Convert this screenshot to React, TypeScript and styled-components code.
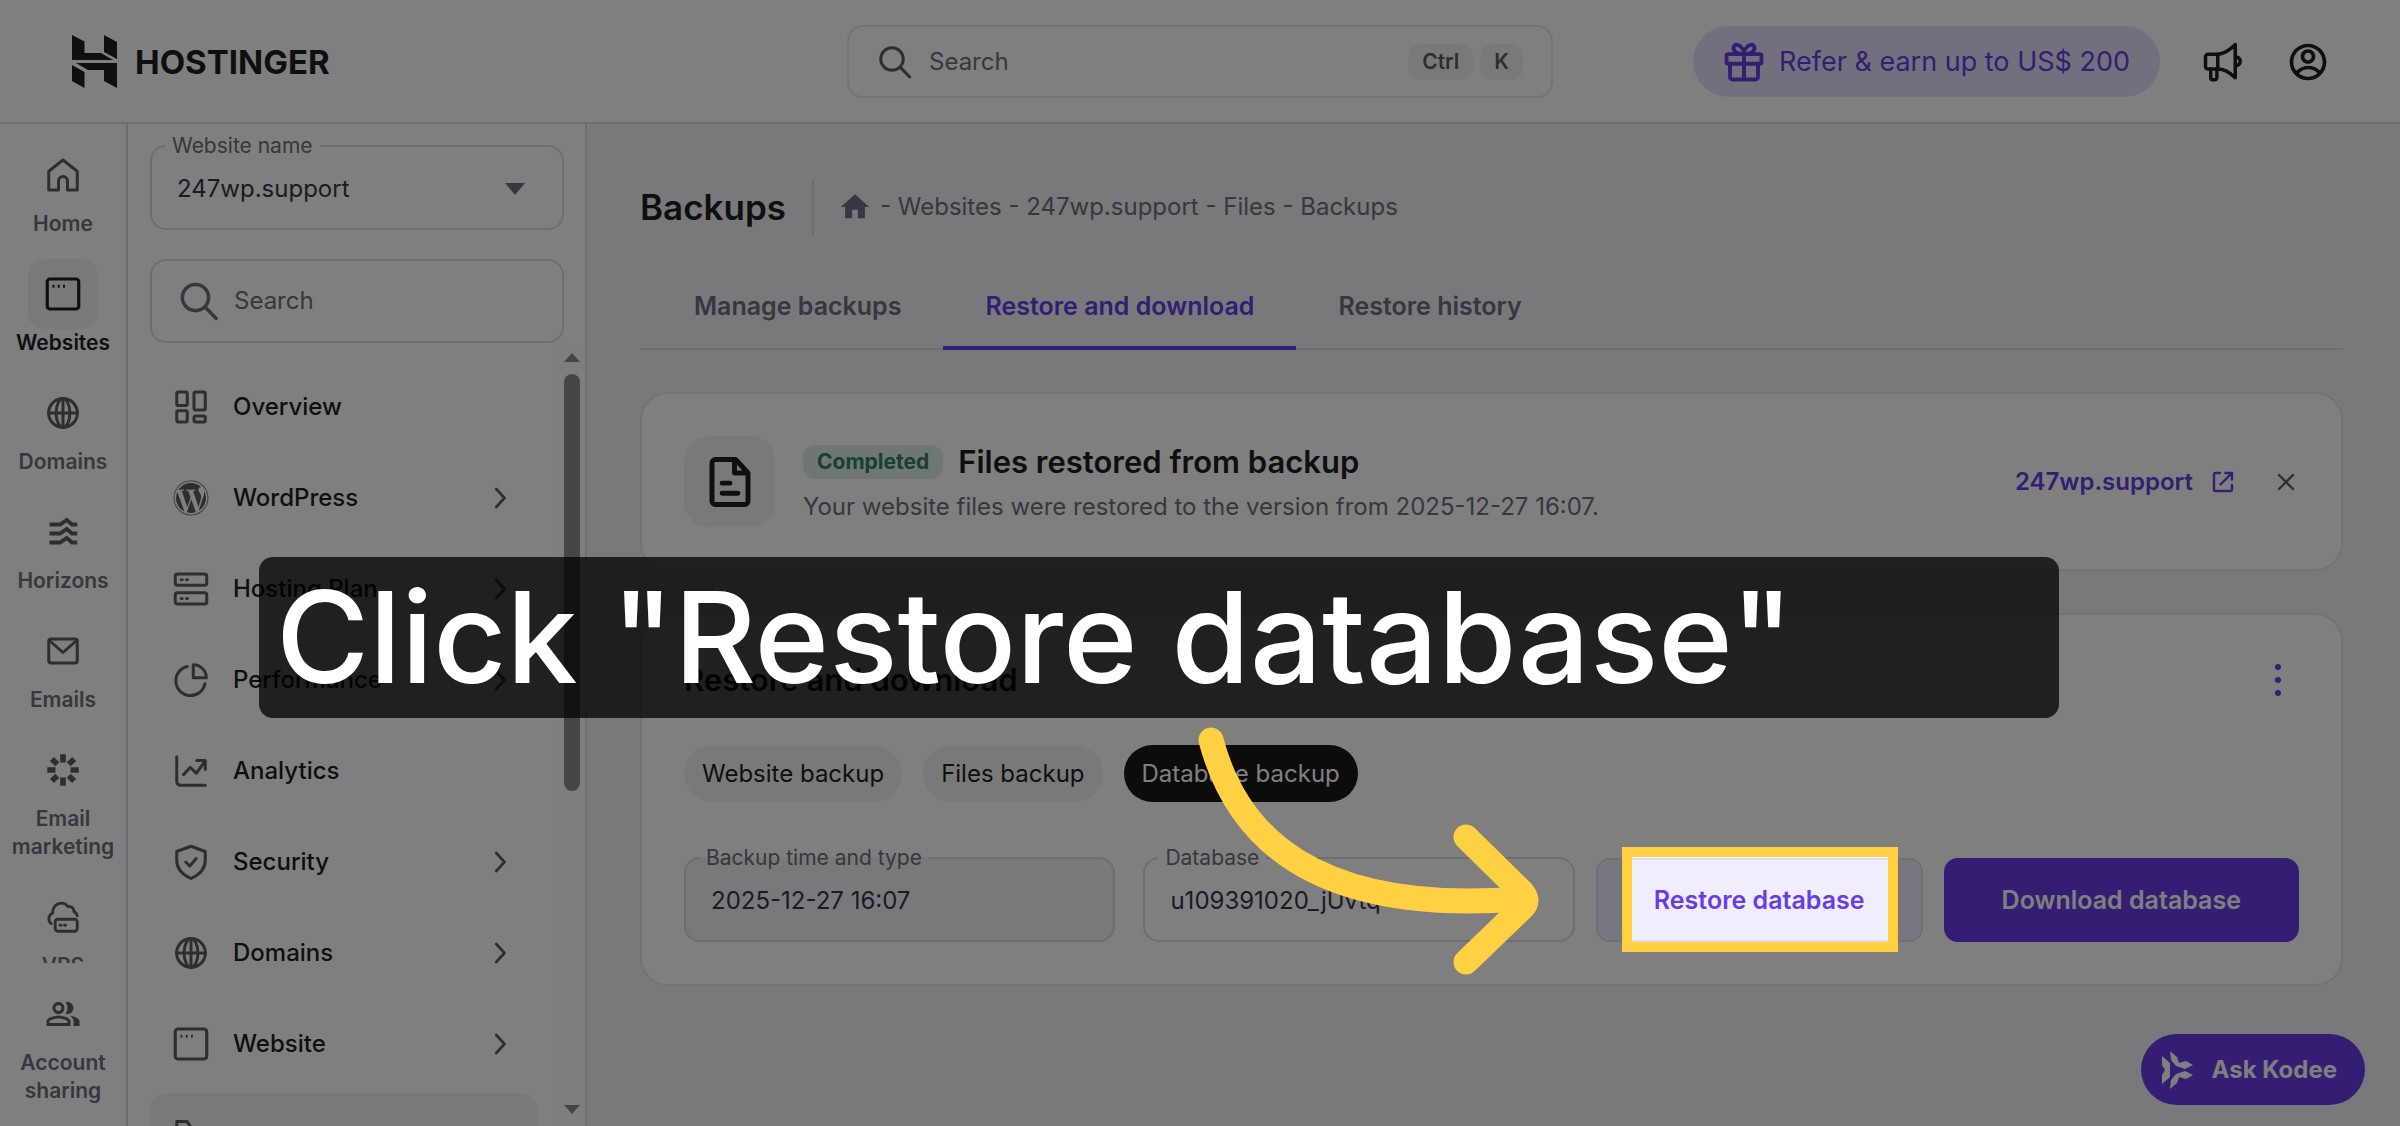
import React from "react";
import styled, { createGlobalStyle, css } from "styled-components";
import { FaWordpress } from "react-icons/fa";
import { RiAccountCircleLine } from "react-icons/ri";
import { MdHome, MdOutlinePeopleAlt } from "react-icons/md";

const color = {
  text: "#1d1e20",
  value: "#36344d",
  muted: "#6d6f80",
  icon: "#5c5d63",
  line: "#dcdce4",
  softLine: "#e6e6ea",
  soft: "#f2f2f3",
  page: "#f2f2f6",
  purple: "#673de6",
  lilac: "#e6e0fb",
  yellow: "#ffd041",
};

const Global = createGlobalStyle`
  *, *::before, *::after { box-sizing: border-box; }
  body { margin: 0; }
  body, button, input, select {
    font-family: Inter, "Liberation Sans", sans-serif;
    font-size: 24px;
    line-height: 32px;
    color: ${color.text};
  }
  button { border: 0; background: none; padding: 0; cursor: pointer; }
  a { text-decoration: none; color: inherit; }
  h1, h2, p, ul, ol { margin: 0; padding: 0; }
  ul, ol { list-style: none; }
`;

/* ---------- Icons ---------- */

type IconProps = { size?: number; width?: number; children?: React.ReactNode };

const Icon = ({ size = 36, width = 2, children }: IconProps) => (
  <svg width={size} height={size} viewBox="0 0 24 24" fill="none" stroke="currentColor"
    strokeWidth={width} strokeLinecap="round" strokeLinejoin="round" aria-hidden="true">
    {children}
  </svg>
);

const SearchIcon = ({ size = 42 }: { size?: number }) => (
  <Icon size={size} width={2}><circle cx="10" cy="10" r="7.5" /><path d="m15.6 15.6 6.2 6.4" /></Icon>
);
const HouseIcon = () => (
  <Icon width={2}><path d="M2.5 9.5 12 2l9.500 7.500V22h-6.500v-6a3 3 0 0 0-6 0v6H2.500Z" /></Icon>
);
const WindowIcon = () => (
  <Icon width={2.1}>
    <rect x="1.500" y="2" width="21" height="20" rx="1.800" />
    <path d="M5 6.800h1.300M8.500 6.800h1.300M12 6.800h1.300" strokeLinecap="butt" />
  </Icon>
);
const GlobeIcon = () => (
  <Icon width={2}>
    <circle cx="12" cy="12" r="9.600" /><ellipse cx="12" cy="12" rx="4.600" ry="9.600" />
    <path d="M12 2.400v19.200M2.400 12h19.200" />
  </Icon>
);
const WavesIcon = () => (
  <Icon width={2.6}>
    <path strokeLinecap="butt" strokeLinejoin="miter" d="M3 7h7l4.500-3 3.500 3h3.500M3 13h7l4.500-3 3.500 3h3.500M3 19h7l4.500-3 3.500 3h3.500" />
  </Icon>
);
const MailIcon = () => (
  <Icon width={2}><rect x="2.500" y="4" width="19" height="16" rx="1.500" /><path d="m3.500 5.500 8.500 7.500 8.500-7.500" /></Icon>
);
const BurstIcon = () => (
  <Icon width={3.8}>
    <path strokeLinecap="butt" d="M12 1.500v5.500M12 17v5.500M1.500 12H7M17 12h5.500M4.600 4.600l3.600 3.600M15.800 15.800l3.600 3.600M4.600 19.400l3.600-3.600M15.800 8.200l3.600-3.600" />
  </Icon>
);
const CloudServerIcon = () => (
  <Icon width={1.9}>
    <path d="M4.200 16.500C1.800 14.500 2 10.800 5 9.500 5 3 12.500.500 15.200 5c3.300-.300 4.300 2.200 4 3.400 1.300.500 2 1.600 2.300 2.800" />
    <rect x="6.800" y="13.500" width="14.700" height="8" rx="1.800" />
    <path d="M10 17.500h.800M13 17.500h.800" />
  </Icon>
);
const GridIcon = () => (
  <Icon width={2}>
    <rect x="2.500" y="2" width="7" height="9" rx="1" /><rect x="14" y="2" width="7.500" height="12" rx="1" />
    <rect x="2.500" y="14.500" width="7" height="7.500" rx="1" /><rect x="14" y="18" width="7.500" height="4" rx="1" />
  </Icon>
);
const ServersIcon = () => (
  <Icon width={2}>
    <rect x="1.500" y="2" width="21" height="7.500" rx="1.500" /><rect x="1.500" y="14.500" width="21" height="7.500" rx="1.500" />
    <path d="M5.500 5.800h.600M9 5.800h.600M5.500 18.300h.600M9 18.300h.600" />
  </Icon>
);
const PieIcon = () => (
  <Icon width={2}><path d="M13.500 1.800v8.700h8.700a8.700 8.700 0 0 0-8.700-8.700Z" /><path d="M9.500 3a9.800 9.800 0 1 0 11.800 11.500" /></Icon>
);
const TrendIcon = () => (
  <Icon width={2}><path d="M2.500 2.500V19a2.500 2.500 0 0 0 2.500 2.500h16.500M7 14.500l4.500-5 4 4L21 6M15.800 5H21.500v5.800" /></Icon>
);
const ShieldIcon = () => (
  <Icon width={2}><path d="M12 1.500 21.500 5v6c0 5.500-4 9.500-9.500 12-5.500-2.500-9.500-6.500-9.500-12V5Z" /><path d="m8.500 12 2.700 2.700 4.300-5" /></Icon>
);
const FolderIcon = () => (
  <Icon width={2}><path d="M2.500 3V20h19V7H12L9.500 3Z" /></Icon>
);
const ChevronIcon = () => <Icon size={36} width={1.8}><path d="m9.500 6 5.500 6-5.500 6" /></Icon>;
const GiftIcon = () => (
  <Icon size={42} width={2.2}>
    <rect x="2" y="7.500" width="20" height="5.500" rx="1" /><path d="M4 13v7.500A1.500 1.500 0 0 0 5.500 22h13a1.500 1.500 0 0 0 1.500-1.500V13M12 7.500V22" />
    <path d="M12 7.500C10 7.500 6 6.800 6 4.200 6 1.400 9.500 1 12 6c2.500-5 6-4.600 6-1.800 0 2.600-4 3.300-6 3.300Z" />
  </Icon>
);
const MegaphoneIcon = () => (
  <Icon size={42} width={2}>
    <path d="M3.500 7.500H9v8.500H3.500a1.500 1.500 0 0 1-1.500-1.500V9a1.500 1.500 0 0 1 1.500-1.500Z" />
    <path d="M9 7.500c4 0 7.500-3 10-5.500v19C16.500 18.500 13 16 9 16M5 16v5a1.200 1.200 0 0 0 1.200 1.200h1A1.200 1.200 0 0 0 8.500 21v-5M19 9c3.800.200 3.800 5 0 5.200" />
  </Icon>
);
const DocumentIcon = () => (
  <Icon size={54} width={2.2}>
    <path d="M14.500 2H5.500a1.500 1.500 0 0 0-1.500 1.500v17A1.500 1.500 0 0 0 5.500 22h13a1.500 1.500 0 0 0 1.500-1.500V8Z" />
    <path d="M14 2.500V8h5.500M8.500 12.500h3.500M8.500 17h7" />
  </Icon>
);
const ExternalIcon = () => (
  <Icon size={24} width={2.4}><path d="M9 3H4.500A1.500 1.500 0 0 0 3 4.500v15A1.500 1.500 0 0 0 4.500 21h15a1.500 1.500 0 0 0 1.500-1.500V15M14.500 3H21v6.500M21 3 9.500 14.500" /></Icon>
);
const CloseIcon = () => <Icon size={24} width={2.4}><path d="m5 5 14 14M19 5 5 19" /></Icon>;
const KodeeIcon = () => (
  <svg width="32" height="38" viewBox="0 0 32 38" fill="currentColor" aria-hidden="true">
    <path d="m0 5 8 7v14l-8 7v-9l3-5-3-5Z" />
    <path d="m8 0 7 6 2 6 7-2 7 4-8 4-9-3-5-6Z" />
    <path d="m8 38 7-6 2-6 7 2 7-4-8-4-9 3-5 6Z" />
  </svg>
);
const LogoMark = () => (
  <svg width="45" height="53" viewBox="0 0 45 53" fill="currentColor" aria-hidden="true">
    <path d="M0 0 12.500 6.500V18H29l12 7H0ZM32 0l13 7v17l-13-7ZM45 28v25l-13-7V35H16L4 28ZM0 30 12.500 37v16L0 46Z" />
  </svg>
);
const Caret = () => (
  <svg width="20" height="12" viewBox="0 0 20 12" fill="currentColor" aria-hidden="true"><path d="M0 0h20L10 12Z" /></svg>
);

/* ---------- Shell and header ---------- */

const Shell = styled.div`
  position: relative;
  display: flex;
  flex-direction: column;
  height: 100vh;
  overflow: hidden;
  background: #fff;
`;
const Header = styled.header`
  display: grid;
  grid-template-columns: 1fr minmax(auto, 706px) 1fr;
  align-items: center;
  gap: 24px;
  padding: 25px 70px 24px;
  border-bottom: 2px solid ${color.line};
`;
const Logo = styled.a`
  display: flex;
  align-items: center;
  gap: 18px;
  padding-left: 2px;
  font-size: 33px;
  font-weight: 700;
  color: ${color.text};
`;
const SearchBox = styled.label<{ $tall?: boolean }>`
  display: flex;
  align-items: center;
  gap: ${(p) => (p.$tall ? 14 : 16)}px;
  height: ${(p) => (p.$tall ? 84 : 73)}px;
  padding: 0 28px;
  padding-left: ${(p) => (p.$tall ? 26 : 28)}px;
  border: 2px solid ${(p) => (p.$tall ? color.line : color.softLine)};
  border-radius: 16px;
  color: ${(p) => (p.$tall ? color.muted : color.icon)};
  svg { flex: none; }
`;
const SearchInput = styled.input`
  flex: 1;
  min-width: 0;
  border: 0;
  padding: 0;
  outline: 0;
  background: transparent;
  &::placeholder { color: ${color.muted}; opacity: 1; }
`;
const Keys = styled.span`
  display: flex;
  gap: 7px;
`;
const Key = styled.kbd`
  padding: 4px 14px;
  border-radius: 12px;
  background: ${color.soft};
  color: ${color.icon};
  font: 600 21px/28px Inter, "Liberation Sans", sans-serif;
`;
const HeaderActions = styled.div`
  display: flex;
  align-items: center;
  justify-content: flex-end;
  gap: 42px;
`;
const ReferButton = styled.button`
  display: flex;
  align-items: center;
  gap: 14px;
  height: 71px;
  padding: 0 30px;
  border-radius: 36px;
  background: ${color.lilac};
  color: ${color.purple};
  font-size: 27px;
  white-space: nowrap;
`;
const IconButton = styled.button<{ $narrow?: boolean }>`
  display: flex;
  align-items: center;
  justify-content: center;
  min-width: ${(p) => (p.$narrow ? 26 : 42)}px;
  min-height: 42px;
  color: ${(p) => (p.$narrow ? color.icon : color.text)};
`;

/* ---------- Navigation ---------- */

const Body = styled.div`
  flex: 1;
  min-height: 0;
  display: flex;
`;
const Rail = styled.nav`
  display: flex;
  flex-direction: column;
  width: 128px;
  border-right: 2px solid ${color.line};
`;
const RailList = styled.ul`
  flex: 1;
  min-height: 0;
  overflow: hidden;
  display: flex;
  flex-direction: column;
  gap: 21px;
  padding-top: 16px;
`;
const RailFooter = styled.div`padding: 16px 0 21px;`;
const RailLink = styled.a<{ $active?: boolean }>`
  display: flex;
  flex-direction: column;
  align-items: center;
  text-align: center;
  font-size: 21px;
  line-height: 28px;
  font-weight: 600;
  color: ${(p) => (p.$active ? color.text : color.muted)};
`;
const RailIcon = styled.span<{ $active?: boolean }>`
  display: flex;
  align-items: center;
  justify-content: center;
  width: 70px;
  height: 70px;
  border-radius: 16px;
  color: ${(p) => (p.$active ? color.text : color.icon)};
  background: ${(p) => (p.$active ? color.soft : "transparent")};
`;
const Sidebar = styled.aside`
  display: flex;
  flex-direction: column;
  width: 459px;
  padding: 9px 0 0 22px;
  border-right: 2px solid ${color.line};
`;
const SidebarTop = styled.div`
  display: flex;
  flex-direction: column;
  gap: 29px;
  padding-right: 21px;
`;
const MenuArea = styled.div`
  flex: 1;
  min-height: 0;
  display: flex;
  overflow: hidden;
`;
const Menu = styled.ul`
  flex: 1;
  display: flex;
  flex-direction: column;
  gap: 7px;
  padding: 22px 22px 0 0;
`;
const MenuLink = styled.a<{ $active?: boolean }>`
  display: flex;
  align-items: center;
  gap: 24px;
  height: 84px;
  padding: 0 19px 0 23px;
  border-radius: 16px;
  background: ${(p) => (p.$active ? color.soft : "transparent")};
  font-weight: 500;
  svg { flex: none; color: ${color.icon}; }
`;
const MenuText = styled.span`flex: 1;`;
const Scrollbar = styled.div`
  display: flex;
  flex-direction: column;
  align-items: center;
  width: 26px;
  padding: 10px 0 12px;
  background: #fcfcfc;
  color: #8b8b8b;
`;
const ScrollTrack = styled.div`
  flex: 1;
  padding: 12px 0;
`;
const ScrollThumb = styled.div`
  width: 16px;
  height: 58%;
  border-radius: 8px;
  background: #8b8b8b;
`;
const ScrollArrow = styled.div<{ $down?: boolean }>`
  border: 8px solid transparent;
  ${(p) => p.$down
    ? css`border-top: 9px solid currentColor; border-bottom: 0;`
    : css`border-bottom: 9px solid currentColor; border-top: 0;`}
`;

/* ---------- Outlined fields ---------- */

const FieldBox = styled.fieldset<{ $filled?: boolean }>`
  flex: 1;
  min-width: 0;
  margin: 0;
  padding: 0 0 9px 13px;
  border: 2px solid ${color.line};
  border-radius: 16px;
  background: ${(p) => (p.$filled ? color.page : "transparent")};
`;
const FieldLegend = styled.legend`
  padding: 0 7px;
  font-size: 21px;
  line-height: 26px;
  color: ${color.muted};
`;
const FieldRow = styled.div`
  display: flex;
  align-items: center;
  height: 60px;
  padding: 0 37px 0 12px;
  color: ${color.muted};
`;
const control = css`
  appearance: none;
  flex: 1;
  min-width: 0;
  padding: 0;
  border: 0;
  outline: 0;
  background: transparent;
  color: ${color.value};
`;
const Select = styled.select`${control}`;
const TextInput = styled.input`${control}`;

/* ---------- Main area ---------- */

const Main = styled.main`
  flex: 1;
  min-width: 0;
  padding: 55px 57px 0 53px;
  background: ${color.page};
`;
const TitleRow = styled.div`
  display: flex;
  align-items: center;
  height: 56px;
`;
const PageTitle = styled.h1`
  font-size: 35px;
  font-weight: 600;
  padding-right: 26px;
`;
const Crumbs = styled.nav`
  display: flex;
  align-items: center;
  gap: 8px;
  align-self: stretch;
  padding-left: 24px;
  border-left: 2px solid ${color.line};
  color: ${color.muted};
`;
const Tabs = styled.div`
  display: flex;
  margin-top: 30px;
  padding-left: 12px;
  border-bottom: 2px solid ${color.line};
`;
const Tab = styled.button<{ $active?: boolean }>`
  margin-bottom: -2px;
  padding: 25px 42px 24px;
  border-bottom: 4px solid ${(p) => (p.$active ? color.purple : "transparent")};
  font-size: 25px;
  font-weight: 600;
  color: ${(p) => (p.$active ? color.purple : color.muted)};
`;
const Card = styled.section`
  margin-top: 42px;
  padding: 42px;
  border: 2px solid ${color.softLine};
  border-radius: 28px;
  background: #fff;
`;
const Notice = styled.div`
  display: flex;
  align-items: center;
`;
const Tile = styled.div`
  display: flex;
  align-items: center;
  justify-content: center;
  width: 91px;
  height: 91px;
  border-radius: 24px;
  background: ${color.page};
`;
const NoticeText = styled.div`
  flex: 1;
  display: flex;
  flex-direction: column;
  gap: 11px;
  padding: 3px 0 0 28px;
`;
const NoticeHead = styled.div`
  display: flex;
  align-items: center;
  gap: 15px;
`;
const Badge = styled.span`
  padding: 3px 14px;
  border-radius: 12px;
  background: #dcefe7;
  color: #2c8260;
  font-size: 21px;
  line-height: 28px;
  font-weight: 700;
`;
const Heading = styled.h2`
  font-size: 31px;
  line-height: 36px;
  font-weight: 600;
`;
const Muted = styled.p`color: ${color.muted};`;
const SiteLink = styled.a`
  display: flex;
  align-items: center;
  gap: 18px;
  margin-right: 38px;
  font-weight: 600;
  color: ${color.purple};
`;
const CardHead = styled.div`
  display: flex;
  align-items: center;
  justify-content: space-between;
  height: 45px;
`;
const Chips = styled.div`
  display: flex;
  gap: 21px;
  margin-top: 43px;
`;
const Chip = styled.button<{ $active?: boolean }>`
  height: 57px;
  padding: 0 18px;
  border-radius: 29px;
  background: ${(p) => (p.$active ? "#18181a" : color.soft)};
  color: ${(p) => (p.$active ? "#fff" : color.text)};
`;
const FormRow = styled.form`
  display: flex;
  align-items: flex-end;
  gap: 21px;
  margin-top: 43px;
`;
const Fields = styled.div`
  flex: 1;
  display: flex;
  gap: 28px;
`;
const Action = styled.button<{ $primary?: boolean }>`
  height: 84px;
  padding: 0 56px;
  border: 2px solid ${(p) => (p.$primary ? color.purple : "#e0dcf0")};
  border-radius: 14px;
  background: ${(p) => (p.$primary ? color.purple : "#f0edff")};
  color: ${(p) => (p.$primary ? "#fff" : color.purple)};
  font-size: 25px;
  font-weight: 600;
  white-space: nowrap;
`;
const AskButton = styled.button`
  position: absolute;
  right: 35px;
  bottom: 21px;
  display: flex;
  align-items: center;
  gap: 18px;
  height: 71px;
  padding: 0 28px 0 21px;
  border-radius: 36px;
  background: ${color.purple};
  color: #fff;
  font-weight: 700;
`;

/* ---------- Tutorial layer: spotlight, arrow and caption ---------- */

const Tutorial = styled.div`
  position: absolute;
  inset: 0;
  overflow: hidden;
  pointer-events: none;
`;
const Spotlight = styled.div`
  position: absolute;
  left: 1622px;
  top: 847px;
  width: 276px;
  height: 105px;
  border: 10px solid ${color.yellow};
  box-shadow: 0 0 0 3000px rgba(0, 0, 0, 0.5);
`;
const Caption = styled.p`
  position: absolute;
  left: 259px;
  top: 557px;
  width: 1800px;
  padding: 0 17px;
  border-radius: 14px;
  background: rgba(0, 0, 0, 0.75);
  color: #fff;
  font-size: 127px;
  line-height: 161px;
  font-weight: 500;
  white-space: nowrap;
`;
const Arrow = styled.svg`
  position: absolute;
  left: 1190px;
  top: 715px;
`;

const railItems = [
  { label: "Home", icon: <HouseIcon /> },
  { label: "Websites", icon: <WindowIcon />, active: true },
  { label: "Domains", icon: <GlobeIcon /> },
  { label: "Horizons", icon: <WavesIcon /> },
  { label: "Emails", icon: <MailIcon /> },
  { label: "Email marketing", icon: <BurstIcon /> },
  { label: "VPS", icon: <CloudServerIcon /> },
];

const menuItems = [
  { label: "Overview", icon: <GridIcon /> },
  { label: "WordPress", icon: <FaWordpress size={36} />, nested: true },
  { label: "Hosting Plan", icon: <ServersIcon />, nested: true },
  { label: "Performance", icon: <PieIcon />, nested: true },
  { label: "Analytics", icon: <TrendIcon /> },
  { label: "Security", icon: <ShieldIcon />, nested: true },
  { label: "Domains", icon: <GlobeIcon />, nested: true },
  { label: "Website", icon: <WindowIcon />, nested: true },
];

const tabs = ["Manage backups", "Restore and download", "Restore history"];
const chips = ["Website backup", "Files backup", "Database backup"];

type FieldProps = { id: string; label: string; filled?: boolean; children: React.ReactNode };

const Field = ({ id, label, filled, children }: FieldProps) => (
  <FieldBox $filled={filled}>
    <FieldLegend><label htmlFor={id}>{label}</label></FieldLegend>
    <FieldRow>{children}</FieldRow>
  </FieldBox>
);

export default function App() {
  return (
    <Shell>
      <Global />
      <Header>
        <Logo href="#"><LogoMark />HOSTINGER</Logo>
        <SearchBox>
          <SearchIcon size={36} />
          <SearchInput type="search" placeholder="Search" aria-label="Search" />
          <Keys><Key>Ctrl</Key><Key>K</Key></Keys>
        </SearchBox>
        <HeaderActions>
          <ReferButton><GiftIcon />Refer &amp; earn up to US$ 200</ReferButton>
          <IconButton aria-label="News"><MegaphoneIcon /></IconButton>
          <IconButton aria-label="Account"><RiAccountCircleLine size={44} /></IconButton>
        </HeaderActions>
      </Header>

      <Body>
        <Rail aria-label="Products">
          <RailList>
            {railItems.map((item) => (
              <li key={item.label}>
                <RailLink href="#" $active={item.active}>
                  <RailIcon $active={item.active}>{item.icon}</RailIcon>
                  {item.label}
                </RailLink>
              </li>
            ))}
          </RailList>
          <RailFooter>
            <RailLink href="#"><RailIcon><MdOutlinePeopleAlt size={36} /></RailIcon>Account sharing</RailLink>
          </RailFooter>
        </Rail>

        <Sidebar>
          <SidebarTop>
            <Field id="site" label="Website name">
              <Select id="site"><option>247wp.support</option></Select>
              <Caret />
            </Field>
            <SearchBox $tall>
              <SearchIcon />
              <SearchInput type="search" placeholder="Search" aria-label="Search menu" />
            </SearchBox>
          </SidebarTop>
          <MenuArea>
            <Menu>
              {menuItems.map((item) => (
                <li key={item.label}>
                  <MenuLink href="#">
                    {item.icon}
                    <MenuText>{item.label}</MenuText>
                    {item.nested && <ChevronIcon />}
                  </MenuLink>
                </li>
              ))}
              <li><MenuLink href="#" $active aria-label="Files"><FolderIcon /></MenuLink></li>
            </Menu>
            <Scrollbar aria-hidden="true">
              <ScrollArrow />
              <ScrollTrack><ScrollThumb /></ScrollTrack>
              <ScrollArrow $down />
            </Scrollbar>
          </MenuArea>
        </Sidebar>

        <Main>
          <TitleRow>
            <PageTitle>Backups</PageTitle>
            <Crumbs aria-label="Breadcrumb">
              <MdHome size={34} />
              <span>- Websites - 247wp.support - Files - Backups</span>
            </Crumbs>
          </TitleRow>
          <Tabs role="tablist">
            {tabs.map((tab, i) => (
              <Tab key={tab} role="tab" aria-selected={i === 1} $active={i === 1}>{tab}</Tab>
            ))}
          </Tabs>

          <Card>
            <Notice>
              <Tile><DocumentIcon /></Tile>
              <NoticeText>
                <NoticeHead><Badge>Completed</Badge><Heading>Files restored from backup</Heading></NoticeHead>
                <Muted>Your website files were restored to the version from 2025-12-27 16:07.</Muted>
              </NoticeText>
              <SiteLink href="#">247wp.support<ExternalIcon /></SiteLink>
              <IconButton $narrow aria-label="Close"><CloseIcon /></IconButton>
            </Notice>
          </Card>

          <Card>
            <CardHead>
              <Heading>Restore and download</Heading>
              <IconButton aria-label="More options">
                <svg width="8" height="34" viewBox="0 0 8 34" fill={color.purple} aria-hidden="true">
                  <circle cx="4" cy="4" r="3" /><circle cx="4" cy="17" r="3" /><circle cx="4" cy="30" r="3" />
                </svg>
              </IconButton>
            </CardHead>
            <Chips>
              {chips.map((chip, i) => <Chip key={chip} aria-pressed={i === 2} $active={i === 2}>{chip}</Chip>)}
            </Chips>
            <FormRow onSubmit={(e) => e.preventDefault()}>
              <Fields>
                <Field id="time" label="Backup time and type" filled>
                  <TextInput id="time" readOnly value="2025-12-27 16:07" />
                </Field>
                <Field id="database" label="Database">
                  <Select id="database"><option>u109391020_jUvtq</option></Select>
                  <Caret />
                </Field>
              </Fields>
              <Action type="button">Restore database</Action>
              <Action type="button" $primary>Download database</Action>
            </FormRow>
          </Card>
        </Main>
      </Body>

      <AskButton><KodeeIcon />Ask Kodee</AskButton>

      <Tutorial>
        <Spotlight />
        <Caption>Click "Restore database"</Caption>
        <Arrow width="370" height="275" viewBox="1190 715 370 275" fill="none" stroke={color.yellow}
          strokeWidth="25" strokeLinecap="round" strokeLinejoin="round" aria-hidden="true">
          <path d="M1211 740C1236 835 1312 915 1520 899" />
          <path d="M1466 837 1522 892Q1530 901 1522 908L1466 962" />
        </Arrow>
      </Tutorial>
    </Shell>
  );
}
